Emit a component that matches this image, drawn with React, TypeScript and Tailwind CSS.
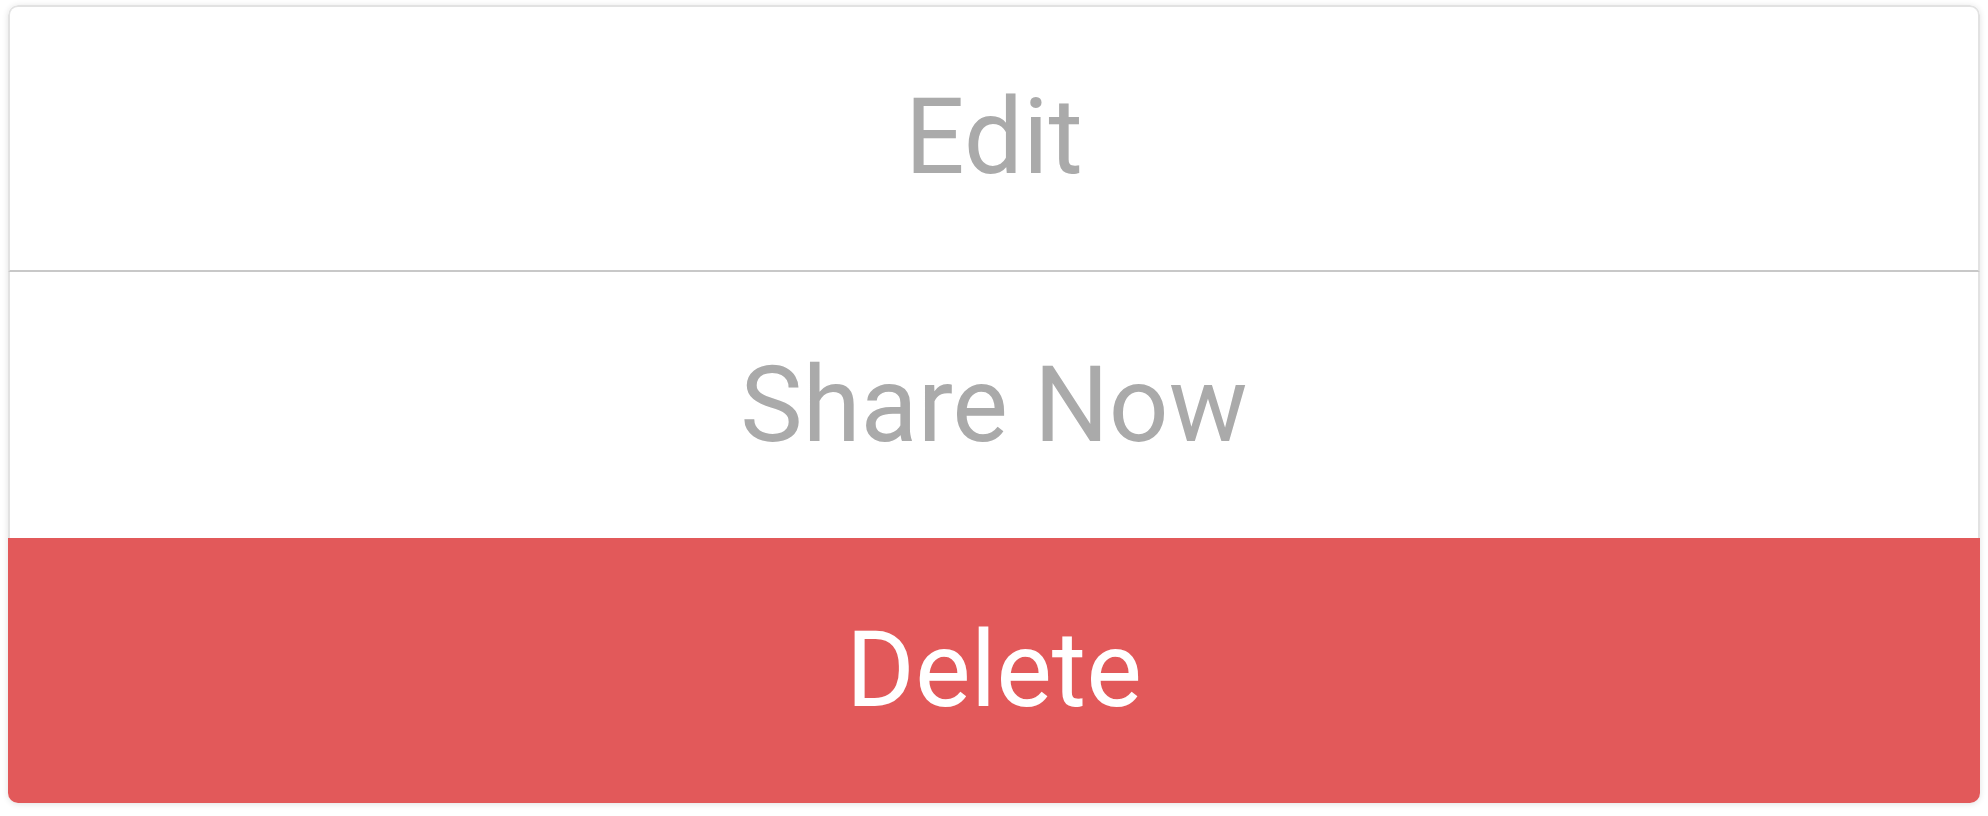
import React from "react";

export default function App() {
  return (
    <div className="w-full h-[816px] bg-white px-2 pt-[5px] pb-[13px]" style={{ fontFamily: "Roboto, 'Noto Sans', sans-serif" }}>
      <div className="flex flex-col h-full rounded-[10px] overflow-hidden shadow-[0_1px_6px_rgba(0,0,0,0.12)]">
        {/* Edit */}
        <button className="h-[267px] pb-[3px] flex items-center justify-center text-[105px] leading-none bg-white text-[#aaaaaa] border-x-2 border-t-2 border-[#e2e2e2] border-b-2 border-b-[#c8c8c8] rounded-t-[10px]">
          Edit
        </button>
        {/* Share Now */}
        <button className="h-[266px] flex items-center justify-center text-[105px] leading-none bg-white text-[#aaaaaa] border-x-2 border-[#e2e2e2]">
          Share Now
        </button>
        {/* Delete */}
        <button className="flex-1 flex items-center justify-center text-[105px] leading-none bg-[#e2595a] text-white">
          Delete
        </button>
      </div>
    </div>
  );
}
